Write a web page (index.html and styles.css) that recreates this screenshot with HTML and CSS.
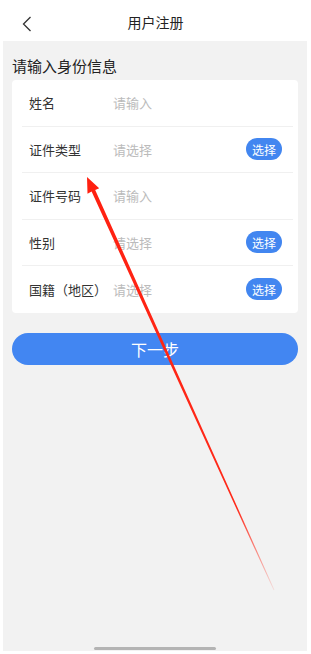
FILE: index.html
```html
<!DOCTYPE html>
<html lang="zh-CN">
<head>
  <meta charset="UTF-8">
  <meta name="viewport" content="width=device-width, initial-scale=1.0">
  <title>用户注册</title>
  <link rel="stylesheet" href="styles.css">
</head>
<body>

  <div class="header">
    <span class="back">
      <svg width="10" height="16" viewBox="0 0 10 16">
        <path d="M8.5 1 L1.5 8 L8.5 15" fill="none" stroke="#333" stroke-width="1.3"/>
      </svg>
    </span>
    <span class="title">用户注册</span>
  </div>

  <div class="content">
    <div class="section-title">请输入身份信息</div>

    <div class="card">
      <div class="row">
        <span class="label">姓名</span>
        <span class="value">请输入</span>
      </div>
      <div class="row">
        <span class="label">证件类型</span>
        <span class="value">请选择</span>
        <button class="pick">选择</button>
      </div>
      <div class="row">
        <span class="label">证件号码</span>
        <span class="value">请输入</span>
      </div>
      <div class="row">
        <span class="label">性别</span>
        <span class="value">请选择</span>
        <button class="pick">选择</button>
      </div>
      <div class="row last">
        <span class="label">国籍（地区）</span>
        <span class="value">请选择</span>
        <button class="pick">选择</button>
      </div>
    </div>

    <button class="next">下一步</button>

    <div class="home-bar"></div>
  </div>

  <!-- annotation arrow drawn over the screenshot -->
  <svg class="arrow" width="311" height="654" viewBox="0 0 311 654">
    <defs>
      <linearGradient id="fade" gradientUnits="userSpaceOnUse" x1="87" y1="177" x2="274" y2="590">
        <stop offset="0" stop-color="#ff2010"/>
        <stop offset="0.8" stop-color="#ff2a1a"/>
        <stop offset="1" stop-color="#ff2a1a" stop-opacity="0.1"/>
      </linearGradient>
    </defs>
    <polygon fill="url(#fade)"
      points="87,177 99.2,188.2 95.2,189.9 274.4,589.8 273.6,590.2 91.6,191.5 87.5,193.7"/>
  </svg>

</body>
</html>
```

FILE: styles.css
```css
body {
  margin: 0;
  background-color: #fff;
  font-family: "Noto Sans CJK SC", "Noto Sans", sans-serif;
  color: #333;
  position: relative;
  height: 654px;
  overflow: hidden;
}

.header {
  height: 41px;
  display: flex;
  align-items: center;
  justify-content: center;
  position: relative;
  background-color: #fff;
}

.header .title {
  font-size: 14px;
  color: #222;
  padding-top: 3px;
}

.back {
  position: absolute;
  left: 22px;
  top: 16px;
  display: flex;
}

.content {
  margin: 0 4px 0 3px;
  height: 610px;
  background-color: #f2f2f2;
  padding: 0 9px;
  display: flex;
  flex-direction: column;
  position: relative;
}

.section-title {
  font-size: 15px;
  color: #222;
  line-height: 20px;
  padding: 15px 0 4px;
}

.card {
  background-color: #fff;
  border-radius: 4px;
  padding: 0 5px 0 10px;
  display: flex;
  flex-direction: column;
}

.row {
  height: 46.5px;
  display: flex;
  align-items: center;
  border-bottom: 1px solid #f0f0f0;
  padding: 0 11px 0 7px;
  box-sizing: border-box;
}

.row.last {
  border-bottom: none;
}

.label {
  width: 84px;
  font-size: 13px;
  color: #333;
}

.value {
  flex: 1;
  font-size: 13px;
  color: #bbb;
}

.pick {
  width: 36px;
  height: 22px;
  border: none;
  border-radius: 11px;
  background-color: #4286f0;
  color: #fff;
  font-family: inherit;
  font-size: 12px;
  padding: 0;
}

.next {
  margin-top: 20px;
  height: 32px;
  border: none;
  border-radius: 16px;
  background-color: #4286f2;
  color: #fff;
  font-family: inherit;
  font-size: 16px;
  padding: 0;
}

.home-bar {
  position: absolute;
  bottom: 1px;
  left: 91px;
  width: 122px;
  height: 3px;
  border-radius: 2px;
  background-color: #b4b4b4;
}

.arrow {
  position: absolute;
  left: 0;
  top: 0;
  pointer-events: none;
}
```
